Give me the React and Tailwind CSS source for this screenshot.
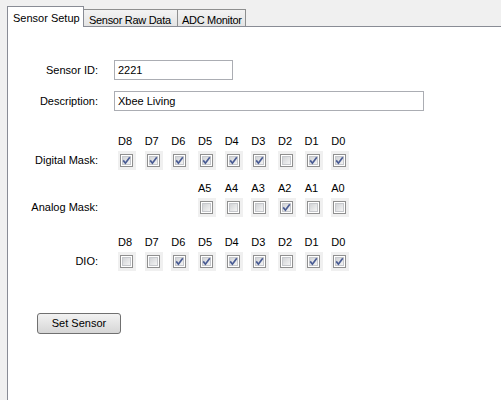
import React from "react";

const digitalMask = [true, true, true, true, true, true, false, true, true];
const analogMask = [false, false, false, true, false, false];
const dio = [false, false, true, true, true, true, false, true, true];
const dLabels = ["D8", "D7", "D6", "D5", "D4", "D3", "D2", "D1", "D0"];
const aLabels = ["A5", "A4", "A3", "A2", "A1", "A0"];

function CheckBox({ checked }) {
  return (
    <div className="w-[18px] h-[19px] bg-[#f0f0f0] flex items-center pl-[2px]">
      <svg width="13" height="13" viewBox="0 0 13 13">
        <defs>
          <linearGradient id="cbfill" x1="0" y1="0" x2="1" y2="1">
            <stop offset="0" stopColor="#cfd1d4" />
            <stop offset="1" stopColor="#f6f6f6" />
          </linearGradient>
        </defs>
        <rect x="0.5" y="0.5" width="12" height="12" fill="#ffffff" stroke="#8f8f8f" />
        <rect x="2.5" y="2.5" width="8" height="8" fill="url(#cbfill)" stroke="#c6c8cc" />
        {checked && (
          <path d="M3.2 6.4 L5.4 9.2 L9.8 3.2" fill="none" stroke="#4a5c94" strokeWidth="1.7" />
        )}
      </svg>
    </div>
  );
}

function MaskBlock({ title, labels, values, offset = 0, className }) {
  return (
    <div className={className}>
      <div className="flex">
        <div className="w-[90px]" />
        <div className="ml-[20px] flex" style={{ paddingLeft: offset * 26.67 }}>
          {labels.map((l) => (
            <div key={l} className="w-[26.67px] h-[13px] leading-[13px]">
              {l}
            </div>
          ))}
        </div>
      </div>
      <div className="flex items-center mt-[3px]">
        <div className="w-[90px] text-right">{title}</div>
        <div className="ml-[20px] flex" style={{ paddingLeft: offset * 26.67 }}>
          {values.map((v, i) => (
            <div key={i} className="w-[26.67px]">
              <CheckBox checked={v} />
            </div>
          ))}
        </div>
      </div>
    </div>
  );
}

export default function App() {
  return (
    <div
      className="w-[501px] h-[400px] overflow-hidden bg-[#f0f0f0] text-[11px] text-black flex flex-col"
      style={{ fontFamily: '"Liberation Sans", Arial, sans-serif' }}
    >
      <div className="flex items-end pl-[7px] pt-[6px] whitespace-nowrap">
        <div className="relative z-10 h-[21px] w-[77px] bg-white border border-b-0 border-[#898c95] pl-[5px] pt-[3px]">
          Sensor Setup
        </div>
        <div className="h-[18px] w-[95px] -ml-px bg-gradient-to-b from-[#f3f3f3] to-[#e3e3e3] border border-b-0 border-[#8e8f8f] pl-[5px] pt-[2px] tracking-[-0.3px]">
          Sensor Raw Data
        </div>
        <div className="h-[18px] w-[69px] -ml-px bg-gradient-to-b from-[#f3f3f3] to-[#e3e3e3] border border-b-0 border-[#8e8f8f] pl-[4px] pt-[2px] tracking-[-0.3px]">
          ADC Monitor
        </div>
      </div>
      <div className="flex-1 -mt-px ml-[7px] bg-white border-l border-t border-[#898c95] pt-[33px]">
        <div className="flex items-center">
          <div className="w-[90px] text-right">Sensor ID:</div>
          <div className="ml-[16px] w-[119px] h-[20px] border border-[#abadb3] pl-[3px] leading-[18px]">
            2221
          </div>
        </div>
        <div className="flex items-center mt-[11px]">
          <div className="w-[90px] text-right">Description:</div>
          <div className="ml-[16px] w-[310px] h-[20px] border border-[#abadb3] pl-[3px] leading-[18px]">
            Xbee Living
          </div>
        </div>
        <MaskBlock className="mt-[24px]" title="Digital Mask:" labels={dLabels} values={digitalMask} />
        <MaskBlock className="mt-[12px]" title="Analog Mask:" labels={aLabels} values={analogMask} offset={3} />
        <MaskBlock className="mt-[19px]" title="DIO:" labels={dLabels} values={dio} />
        <button className="mt-[42px] ml-[29px] w-[84px] h-[21px] rounded-[3px] border border-[#707070] bg-gradient-to-b from-[#f2f2f2] to-[#d6d6d6] flex items-center justify-center">
          Set Sensor
        </button>
      </div>
    </div>
  );
}
